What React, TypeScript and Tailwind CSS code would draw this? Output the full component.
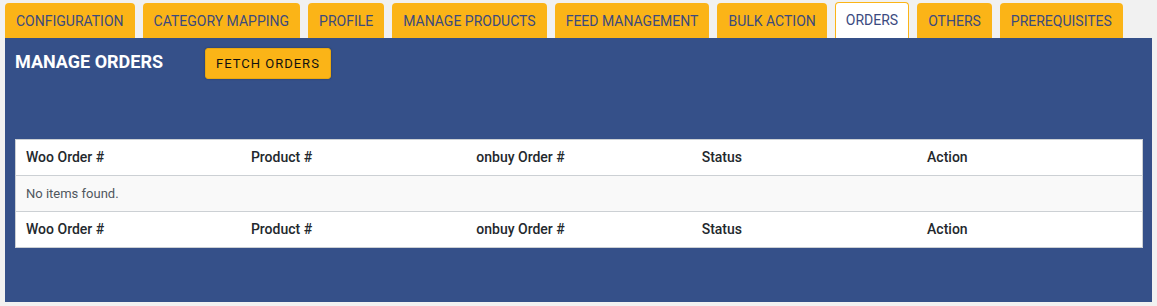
const TABS = [
  "CONFIGURATION",
  "CATEGORY MAPPING",
  "PROFILE",
  "MANAGE PRODUCTS",
  "FEED MANAGEMENT",
  "BULK ACTION",
  "ORDERS",
  "OTHERS",
  "PREREQUISITES",
];

const COLUMNS = ["Woo Order #", "Product #", "onbuy Order #", "Status", "Action"];

function HeaderRow({ top }: { top?: boolean }) {
  return (
    <tr className={top ? "border-b border-[#ccd0d4]" : "border-t border-[#ccd0d4]"}>
      {COLUMNS.map((c) => (
        <th
          key={c}
          className="h-[36px] w-1/5 px-[10px] text-left align-middle text-[14px] font-medium text-[#23282d]"
        >
          {c}
        </th>
      ))}
    </tr>
  );
}

export default function App() {
  const active = "ORDERS";
  return (
    <div
      className="h-[306px] w-[1157px] bg-[#f1f1f1] px-[5px] pt-[2px]"
      style={{ fontFamily: "Roboto, 'Liberation Sans', sans-serif" }}
    >
      <div className="flex h-[36px] items-end gap-[8px]">
        {TABS.map((t) =>
          t === active ? (
            <div
              key={t}
              className="flex h-[36px] items-center rounded-t-[4px] border border-b-0 border-[#fbb417] bg-white px-[10px] pb-[1px] text-[14px] text-[#3b4a80]"
            >
              {t}
            </div>
          ) : (
            <div
              key={t}
              className="flex h-[35px] items-center rounded-t-[4px] bg-[#fbb417] px-[11px] pt-[1px] text-[14px] text-[#3b4a7e]"
            >
              {t}
            </div>
          )
        )}
      </div>
      <div className="h-[264px] bg-[#355089] pl-[10px] pr-[9px] pt-[10px]">
        <div className="flex items-start">
          <h2 className="w-[190px] pt-[1px] text-[18px] leading-[26px] font-bold text-white">MANAGE ORDERS</h2>
          <button
            type="button"
            className="h-[31px] rounded-[3px] border border-[#e9a80f] bg-[#fbb417] px-[10px] text-[13px] font-normal tracking-[1px] text-[#111] shadow-[0_0_2px_rgba(0,0,0,0.3)]"
          >
            FETCH ORDERS
          </button>
        </div>
        <table className="mt-[60px] w-full table-fixed border border-[#ccd0d4] bg-white">
          <thead>
            <HeaderRow top />
          </thead>
          <tbody>
            <tr className="bg-[#f9f9f9]">
              <td colSpan={5} className="h-[36px] px-[10px] align-middle text-[13px] text-[#50575e]">
                No items found.
              </td>
            </tr>
          </tbody>
          <tfoot>
            <HeaderRow />
          </tfoot>
        </table>
      </div>
    </div>
  );
}
